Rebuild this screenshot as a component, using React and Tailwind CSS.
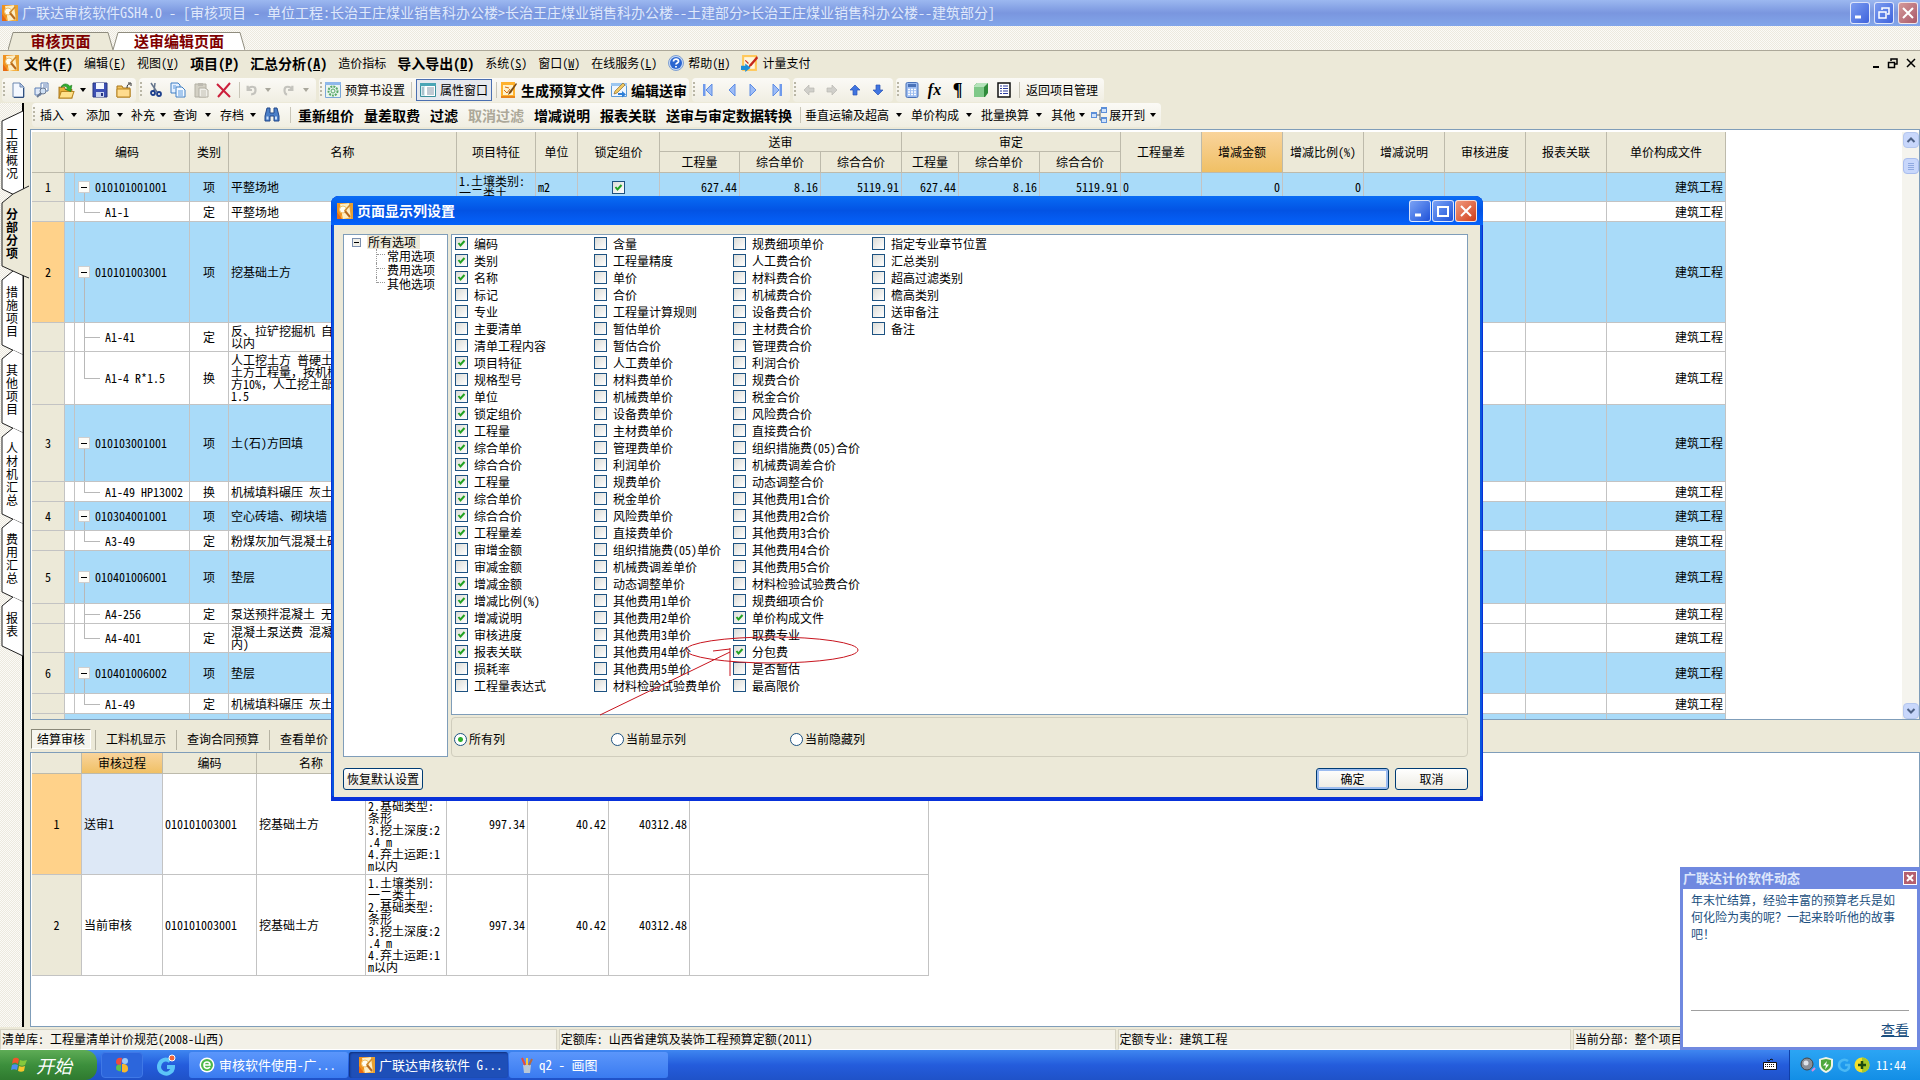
import React from "react";

const FONT = "font-[family-name:'Noto_Sans_Mono_CJK_SC','Noto_Sans_CJK_SC',sans-serif]";
const CHECKER =
  "bg-[conic-gradient(#fbfaf7_25%,#ece9de_0_50%,#fbfaf7_0_75%,#ece9de_0)] bg-[length:2px_2px]";

/* ---------- icons ---------- */

function AppIcon() {
  return (
    <svg viewBox="0 0 16 16" className="size-4 shrink-0">
      <rect width="16" height="16" rx="1" fill="#f6b040" />
      <path d="M0 0h10L3 16H0z" fill="#f0921e" />
      <path d="M3 1l12-1v14l-9 2z" fill="#fdeec4" />
      <path d="M12 0h4v16h-2z" fill="#e8a030" />
      <path d="M0 9l5 7H0z" fill="#e86a12" />
      <circle cx="6" cy="6.500" r="3.500" fill="#fffdf2" stroke="#eec06a" />
      <path d="M8 8l5 6" stroke="#b8691c" strokeWidth="2" />
      <path d="M13 2L7.500 8" stroke="#d08a2c" strokeWidth="1.500" />
    </svg>
  );
}

function Ico({ children, s = 16 }) {
  return (
    <svg viewBox="0 0 16 16" width={s} height={s} className="shrink-0">
      {children}
    </svg>
  );
}

const NewIcon = () => (
  <Ico>
    <path d="M3 1h7l4 4v10H3z" fill="#f4f8ff" stroke="#6d87b0" />
    <path d="M10 1v4h4z" fill="#b9cbea" stroke="#6d87b0" />
    <path d="M13.500 6v9.500H4" fill="none" stroke="#30507f" />
  </Ico>
);
const PagesIcon = () => (
  <Ico>
    <path d="M7 1h7v8H7z" fill="#fff" stroke="#5c7fb5" />
    <path d="M9 3h4M9 5h4M9 7h3" stroke="#5c7fb5" />
    <path d="M1 6h6v7H1z" fill="#dfe9f8" stroke="#5c7fb5" />
    <circle cx="9" cy="9" r="3" fill="#cfe0f5" stroke="#6b7a92" />
    <path d="M7 11l-4 4" stroke="#6b7a92" strokeWidth="2" />
  </Ico>
);
const OpenIcon = () => (
  <Ico s={17}>
    <path d="M1 5h5l1 2h6v8H1z" fill="#e9b038" stroke="#a9761b" />
    <path d="M3 9h12l-2 6H1z" fill="#ffe08a" stroke="#b98520" />
    <path d="M3 5c1-4 6-4 8-1l2-1-1 6-5-2 2-1C8 4 6 3 3 5z" fill="#2fb02f" stroke="#1c7a1c" strokeWidth="0.600" />
  </Ico>
);
const SaveIcon = () => (
  <Ico>
    <path d="M1 1h14v14H1z" fill="#3d50b4" stroke="#26347f" />
    <path d="M4 1h8v6H4z" fill="#f6f9ff" />
    <path d="M4 10h8v5H4z" fill="#c9d3ef" />
    <path d="M9 11h2v3H9z" fill="#26347f" />
  </Ico>
);
const FolderIcon = () => (
  <Ico>
    <path d="M1 4h5l1 2h7v9H1z" fill="#f2c35c" stroke="#a9761b" />
    <path d="M1 7h13v8H1z" fill="#ffdc8e" stroke="#b98520" />
    <path d="M11 6c0-3 1-4 3-4M12 1h3v3" fill="none" stroke="#333" />
  </Ico>
);
const CutIcon = () => (
  <Ico>
    <path d="M4 1l6 9M8 1L7 9" stroke="#64748b" strokeWidth="1.500" />
    <circle cx="6" cy="11" r="2" fill="none" stroke="#1d3f8c" strokeWidth="1.800" />
    <circle cx="12" cy="12" r="2" fill="none" stroke="#1d3f8c" strokeWidth="1.800" />
  </Ico>
);
const CopyIcon = () => (
  <Ico>
    <path d="M1 1h7l2 2v8H1z" fill="#e6f1ff" stroke="#3f7fc4" />
    <path d="M6 5h6l3 3v7H6z" fill="#f3f9ff" stroke="#3f7fc4" />
    <path d="M3 4h3M3 6h2M8 9h5M8 11h5M8 13h5" stroke="#5a9ae0" />
  </Ico>
);
const PasteIcon = () => (
  <Ico>
    <path d="M2 2h11v13H2z" fill="#d3d0c4" stroke="#b3b0a4" />
    <path d="M5 1h5v3H5z" fill="#bdbab0" />
    <path d="M6 6h6l3 2v7H6z" fill="#efeee8" stroke="#b3b0a4" />
    <path d="M8 9h5M8 11h5M8 13h5" stroke="#c3c0b4" />
  </Ico>
);
const DeleteIcon = () => (
  <Ico>
    <path d="M1 2l13 13M14 1L2 15" stroke="#cc1f3c" strokeWidth="2" />
  </Ico>
);
const UndoIcon = () => (
  <Ico s={14}>
    <path d="M3 3v5h5M3 8c2-5 9-5 9 0 0 3-2 5-5 5" fill="none" stroke="#c4c3bd" strokeWidth="2.500" />
  </Ico>
);
const RedoIcon = () => (
  <Ico s={14}>
    <path d="M13 3v5H8M13 8C11 3 4 3 4 8c0 3 1 5 3 5" fill="none" stroke="#c4c3bd" strokeWidth="2.500" />
  </Ico>
);
const GearBookIcon = () => (
  <Ico>
    <path d="M.5.5h15v15H.5z" fill="#e9f5ef" stroke="#7aa6d8" />
    <path d="M0 0h16v3H0z" fill="#8fb8ea" />
    <circle cx="8" cy="9" r="4.500" fill="none" stroke="#58a866" strokeWidth="2" strokeDasharray="2 1" />
    <circle cx="8" cy="9" r="2" fill="none" stroke="#58a866" />
  </Ico>
);
const PropsIcon = () => (
  <Ico>
    <path d="M.5 1.500h15v13H.5z" fill="#fff" stroke="#3b8f9c" />
    <path d="M0 1h16v3H0z" fill="#4aa5b5" />
    <path d="M1 4h4v10H1z" fill="#d5ecf0" />
    <path d="M2 6h2M2 8h2M2 10h2M2 12h2M7 6h7M7 8h7M7 10h7M7 12h7" stroke="#8296a8" />
  </Ico>
);
const BuildIcon = () => (
  <Ico>
    <path d="M0 0h14v16H0z" fill="#ffb22e" />
    <path d="M2 3h10v10H2z" fill="#fff3cd" />
    <path d="M0 14h14v2H0z" fill="#e8851a" />
    <path d="M3 8l3 3 3-4M4 5l4 1" stroke="#d46a12" fill="none" />
    <path d="M15 1L8 10l-1 3 3-2 6-9z" fill="#7a4a14" />
  </Ico>
);
const EditSendIcon = () => (
  <Ico>
    <path d="M.5 1.500h15v13H.5z" fill="#eef6ff" stroke="#5a9ad8" />
    <path d="M0 1h16v3H0z" fill="#9cc7f0" />
    <path d="M12 1L4 9l-1 3 3-1 8-8z" fill="#f0c860" stroke="#7a5a1c" strokeWidth="0.600" />
    <path d="M7 11h4V9l4 3.500-4 3V13H7z" fill="#2e7fd8" />
  </Ico>
);
const HelpIcon = () => (
  <Ico>
    <circle cx="8" cy="8" r="7.500" fill="#c9dcf8" stroke="#7f9fd0" />
    <circle cx="8" cy="8" r="6" fill="#2b66d0" />
    <path d="M5.500 6.500c0-3.500 5.500-3 5 0-.300 1.500-2.500 1.500-2.500 3M8 11v1.500" fill="none" stroke="#fff" strokeWidth="1.800" />
  </Ico>
);
const PayIcon = () => (
  <Ico s={17}>
    <path d="M1 0h14v15H1z" fill="#ffc85a" />
    <path d="M3 2h10v11H3z" fill="#fff6dd" />
    <path d="M15 1L8 9l-1 3 3-2 6-7z" fill="#c4261c" />
    <path d="M4 5l3 3" stroke="#c4261c" />
    <path d="M0 10h4V8l5 4-5 4v-2H0z" fill="#1f8fd6" />
  </Ico>
);
function Nav({ left, bar }) {
  return (
    <svg viewBox="0 0 12 14" className={left ? "h-3.5 w-3" : "h-3.5 w-3 rotate-180"}>
      {bar && <path d="M1 1h2.500v12H1z" fill="#6f9aec" />}
      <path d="M10 1v12L4 7z" fill="#9dbcf6" stroke="#5d8ce4" />
    </svg>
  );
}
const Arr = ({ rot, gray }) => (
  <svg viewBox="0 0 12 12" className={"size-3 " + rot}>
    <path
      d="M6 1l5 5H8v5H4V6H1z"
      fill={gray ? "#d0cfca" : "#3f74e0"}
      stroke={gray ? "#b9b8b3" : "#2b55b4"}
      strokeWidth="0.700"
    />
  </svg>
);
const CalcIcon = () => (
  <Ico>
    <rect x="2" y="0.500" width="12" height="15" rx="1.500" fill="#9cbcf0" stroke="#4a72b8" />
    <path d="M4 2h8v3H4z" fill="#4a72b8" />
    <path d="M4 7.500h8M4 10h8M4 12.500h8" stroke="#fff" strokeWidth="1.500" strokeDasharray="2 1" />
  </Ico>
);
const BoxIcon = () => (
  <Ico>
    <path d="M1 4l3-3h11v10l-3 4H1z" fill="#2f8b3a" />
    <path d="M1 5h10v10H1z" fill="#7fc888" />
    <path d="M1 4l3-3h11l-4 4H1z" fill="#b5e3ba" />
  </Ico>
);
const ListIcon = () => (
  <Ico>
    <path d="M2 1h12v14H2z" fill="#fff" stroke="#111" strokeWidth="1.500" />
    <path d="M4 4h2M4 6.500h2M4 9h2M4 11.500h2M7 4h5M7 6.500h5M7 9h5M7 11.500h5" stroke="#2f3fa0" strokeWidth="1.200" />
  </Ico>
);
const BinoIcon = () => (
  <Ico>
    <path d="M3 1h3v5h4V1h3l2 8v5h-5V9H6v5H1V9z" fill="#4b7fc8" stroke="#23488a" />
    <path d="M2.500 9.500h2v3h-2zM11 9.500h2v3h-2z" fill="#cfe2fb" />
  </Ico>
);
const ExpandIcon = () => (
  <Ico>
    <path d="M5 8h4M9 3v10M9 3h2M9 13h2" stroke="#55606e" fill="none" />
    <path d="M0 5h6v6H0zM10 0h6v6h-6zM10 10h6v6h-6z" fill="#5c8fd8" />
    <path d="M1 7h4v3H1zM11 2h4v3h-4zM11 12h4v3h-4z" fill="#cfe2fb" />
  </Ico>
);
const Caret = ({ gray, w = "w-5" }) => (
  <span className={"flex justify-center " + w}>
    <svg viewBox="0 0 6 4" className="h-1 w-1.5">
      <path d="M0 0h6L3 4z" fill={gray ? "#a9a79c" : "#000"} />
    </svg>
  </span>
);

/* ---------- toolbar parts ---------- */

const Grip = () => (
  <span className="mx-px h-4 w-0.5 bg-[repeating-linear-gradient(#b9b6a6_0_2px,transparent_2px_4px)]" />
);
const Sep = () => <span className="mx-1 h-4 w-px bg-[#c9c6b8]" />;
const Bar = ({ children, className = "" }) => (
  <div
    className={
      "flex h-6 items-center rounded-sm bg-linear-to-b from-[#fbfaf6] to-[#f0eee2] " + className
    }
  >
    <Grip />
    {children}
  </div>
);
const Tool = ({ children, label, w = "w-6" }) => (
  <button type="button" aria-label={label} className={"flex h-6 items-center justify-center " + w}>
    {children}
  </button>
);

const MENU = [
  ["文件", "F", true],
  ["编辑", "E"],
  ["视图", "V"],
  ["项目", "P", true],
  ["汇总分析", "A", true],
  ["造价指标"],
  ["导入导出", "D", true],
  ["系统", "S"],
  ["窗口", "W"],
  ["在线服务", "L"],
];

function MenuItem({ text, k, bold, children }) {
  return (
    <button type="button" className={"flex items-center gap-1 " + (bold ? "text-sm font-bold" : "text-xs")}>
      {children}
      <span>
        {text}
        {k && (
          <>
            (<u>{k}</u>)
          </>
        )}
      </span>
    </button>
  );
}

function WinBtn({ kind, dim, label }) {
  const look =
    kind === "close"
      ? dim
        ? "w-5 from-[#d59a9a] to-[#a8586a]"
        : "w-5.5 from-[#f0997c] to-[#cf3a14]"
      : dim
        ? "w-5 from-[#7d9cf0] to-[#3f62dc]"
        : "w-5.5 from-[#7ba2f5] to-[#1f50d8]";
  return (
    <button
      type="button"
      aria-label={label}
      className={"flex h-5.5 items-center justify-center rounded-[3px] border border-white/80 bg-linear-to-br " + look}
    >
      <svg viewBox="0 0 16 16" className="size-4" fill="none" stroke="#fff" strokeWidth="2">
        {kind === "min" && <path d="M3 12h6" strokeWidth="3" />}
        {kind === "max" && <path d="M3 4h10v9H3zM3 4h10" />}
        {kind === "restore" && <path d="M6 5V3h7v6h-2M3 7h7v6H3z" strokeWidth="1.500" />}
        {kind === "close" && <path d="M3 3l10 10M13 3L3 13" />}
      </svg>
    </button>
  );
}

/* ---------- left vertical tabs ---------- */

const SIDE = [
  { t: "工程概况", h: "h-[82px]", n: 82 },
  { t: "分部分项", h: "h-[77px]", n: 77, on: true },
  { t: "措施项目", h: "h-[79px]", n: 79 },
  { t: "其他项目", h: "h-[78px]", n: 78 },
  { t: "人材机汇总", h: "h-[91px]", n: 91 },
  { t: "费用汇总", h: "h-[78px]", n: 78 },
  { t: "报表", h: "h-[54px]", n: 54 },
];

function SideTabs() {
  return (
    <nav className={"relative flex w-6 shrink-0 flex-col border-r-2 border-black pt-[9px] " + CHECKER}>
      {SIDE.map((s, i) => (
        <button
          key={s.t}
          type="button"
          className={
            "relative flex w-6 items-center justify-center px-1.5 text-center text-xs/[13px] " +
            s.h +
            (s.on ? " z-10 font-bold" : "")
          }
        >
          <svg
            viewBox={"0 0 30 " + s.n}
            width="30"
            height={s.n}
            className="absolute top-0 left-0 overflow-visible"
          >
            <path
              d={
                (i === 0 ? "M23 -1L2 9" : s.on ? "M29 -8L13 0L2 9" : "M13 0L2 9") +
                "V" +
                (s.n - 5) +
                (s.on ? "L24 " + (s.n + 5) + "L29 " + (s.n + 7) : "L23 " + (s.n + 5) + (i === 0 ? "" : "V5"))
              }
              fill={s.on ? "#ece9d8" : "#fff"}
              stroke="#222"
            />
          </svg>
          <span className="relative w-3 break-all">{s.t}</span>
        </button>
      ))}
    </nav>
  );
}

/* ---------- main grid ---------- */

const ROWS = [
  { n: "1", code: "010101001001", type: "项", name: "平整场地", h: "h-[29px]" },
  { code: "A1-1", type: "定", name: "平整场地", h: "h-5", last: true },
  { n: "2", code: "010101003001", type: "项", name: "挖基础土方", h: "h-[101px]", sel: true },
  { code: "A1-41", type: "定", name: "反、拉铲挖掘机 自\n以内", h: "h-[29px]" },
  {
    code: "A1-4 R*1.5",
    type: "换",
    name: "人工挖土方 普硬土\n土方工程量，按机械\n方10%，人工挖土部\n1.5",
    h: "h-[53px]",
    last: true,
  },
  { n: "3", code: "010103001001", type: "项", name: "土(石)方回填", h: "h-[77px]" },
  { code: "A1-49 HP13002", type: "换", name: "机械填料碾压 灰土", h: "h-5", last: true },
  { n: "4", code: "010304001001", type: "项", name: "空心砖墙、砌块墙", h: "h-[29px]" },
  { code: "A3-49", type: "定", name: "粉煤灰加气混凝土砌", h: "h-5", last: true },
  { n: "5", code: "010401006001", type: "项", name: "垫层", h: "h-[53px]" },
  { code: "A4-256", type: "定", name: "泵送预拌混凝土 无", h: "h-5" },
  { code: "A4-401", type: "定", name: "混凝土泵送费 混凝\n内)", h: "h-[29px]", last: true },
  { n: "6", code: "010401006002", type: "项", name: "垫层", h: "h-[41px]" },
  { code: "A1-49", type: "定", name: "机械填料碾压 灰土", h: "h-5", last: true },
];

const COLS = [33, 125, 39, 228, 79, 42, 82, 80, 81, 81, 57, 81, 81, 81, 81, 81, 81, 81, 81, 119];
const FIRST = ["", "", "", "", "", "", "", "627.44", "8.16", "5119.91", "627.44", "8.16", "5119.91", "0", "0", "0", "", "", "", "建筑工程"];

const CELL = "border-r border-b border-[#c3c3c3] ";
const HEAD = "border-r border-b border-[#bdbaab] font-normal ";

function Check({ label, on }) {
  return (
    <label className="flex h-[17px] items-center gap-1.5 whitespace-nowrap">
      <span className="grid size-[13px] shrink-0 place-items-center">
        <input
          type="checkbox"
          defaultChecked={on}
          aria-label={label ? undefined : "锁定组价"}
          className="peer col-start-1 row-start-1 size-[13px] appearance-none border border-[#1d5281] bg-linear-to-br from-[#dcdcd7] to-white"
        />
        <svg viewBox="0 0 9 9" className="pointer-events-none col-start-1 row-start-1 hidden size-[9px] peer-checked:block">
          <path d="M1.500 4l2 2.500L7.500 2" fill="none" stroke="#21a121" strokeWidth="2" />
        </svg>
      </span>
      {label && <span>{label}</span>}
    </label>
  );
}

function CodeCell({ r }) {
  return (
    <td className={CELL + "relative p-0"}>
      <span className="absolute inset-y-0 left-[9px] w-px bg-[#c3c3c3]" />
      {r.n ? (
        <div className="flex items-center pl-[13px]">
          <span className="absolute top-1/2 bottom-0 left-[19px] w-px bg-[#b8b8b8]" />
          <button
            type="button"
            aria-label="折叠"
            className="relative flex size-3 items-center justify-center border border-[#cfcfcf] bg-[#fdfcf8]"
          >
            <span className="h-px w-1.5 bg-black" />
          </button>
          <span className="pl-[5px]">{r.code}</span>
        </div>
      ) : (
        <div className="pl-10">
          <span className={"absolute top-0 left-[19px] w-px bg-[#b8b8b8] " + (r.last ? "h-1/2" : "h-full")} />
          <span className="absolute top-1/2 left-[19px] h-px w-4 bg-[#b8b8b8]" />
          {r.code}
        </div>
      )}
    </td>
  );
}

function MainGrid() {
  return (
    <div className="flex h-[591px] shrink-0 overflow-hidden border border-[#7f9db9] bg-white pt-0.5 pl-px">
      <div className="min-w-0 flex-1 overflow-hidden">
        <table className="w-[1694px] table-fixed border-separate border-spacing-0 text-xs/3">
          <colgroup>
            {COLS.map((w, i) => (
              <col key={i} style={{ width: w }} />
            ))}
          </colgroup>
          <thead className="bg-[#ece9d8]">
            <tr className="h-[20px]">
              {["", "编码", "类别", "名称", "项目特征", "单位", "锁定组价"].map((t, i) => (
                <th key={i} rowSpan={2} className={HEAD + "p-0"}>
                  {t}
                </th>
              ))}
              <th colSpan={3} className={HEAD + "p-0"}>
                送审
              </th>
              <th colSpan={3} className={HEAD + "p-0"}>
                审定
              </th>
              {["工程量差", "增减金额", "增减比例(%)", "增减说明", "审核进度", "报表关联", "单价构成文件"].map((t) => (
                <th
                  key={t}
                  rowSpan={2}
                  className={HEAD + "p-0 whitespace-nowrap " + (t === "增减金额" ? "bg-linear-to-b from-[#f9d49b] to-[#f0c064]" : "")}
                >
                  {t}
                </th>
              ))}
            </tr>
            <tr className="h-[21px]">
              {["工程量", "综合单价", "综合合价", "工程量", "综合单价", "综合合价"].map((t, i) => (
                <th key={i} className={HEAD + "p-0"}>
                  {t}
                </th>
              ))}
            </tr>
          </thead>
          <tbody>
            {ROWS.map((r, i) => (
              <tr key={i} className={r.h + (r.n ? " bg-[#a9dbf9]" : " bg-white")}>
                <th className={CELL + "p-0 font-normal " + (r.sel ? "bg-[#ffd28a]" : "bg-[#ece9d8]")}>{r.n}</th>
                <CodeCell r={r} />
                <td className={CELL + "p-0 text-center"}>{r.type}</td>
                <td className={CELL + "overflow-hidden p-0 pl-0.5 whitespace-pre"}>{r.name}</td>
                <td className={CELL + "p-0 pl-0.5 whitespace-pre"}>{i === 0 ? "1.土壤类别:\n一二类土" : ""}</td>
                <td className={CELL + "p-0 pl-0.5"}>{i === 0 ? "m2" : ""}</td>
                <td className={CELL + "p-0"}>
                  {i === 0 && (
                    <div className="flex justify-center">
                      <Check on />
                    </div>
                  )}
                </td>
                {COLS.slice(7).map((_, j) => (
                  <td key={j} className={CELL + "p-0 px-0.5 " + (j === 6 ? "text-left" : "text-right")}>
                    {i === 0 ? FIRST[j + 7] : j === 12 ? "建筑工程" : ""}
                  </td>
                ))}
              </tr>
            ))}
            <tr className="h-[6px] bg-[#a9dbf9]">
              <th className={CELL + "bg-[#ece9d8] p-0"} />
              {COLS.slice(1).map((_, j) => (
                <td key={j} className={CELL + "p-0"} />
              ))}
            </tr>
          </tbody>
        </table>
      </div>
      <div className="flex w-[17px] flex-col items-center bg-[#f5f4ee]">
        <button type="button" aria-label="向上滚动" className="flex size-4 items-center justify-center rounded-sm border border-[#b5c7ee] bg-[#c8d7fb]">
          <svg viewBox="0 0 9 6" className="h-1.5 w-2.5">
            <path d="M1 5l3.500-3.500L8 5" fill="none" stroke="#4d6185" strokeWidth="2" />
          </svg>
        </button>
        <span className="mt-2.5 flex size-4 flex-col items-center justify-center gap-px rounded-sm border border-[#a9bdee] bg-[#c8d7fb]">
          <span className="h-px w-1.5 bg-[#8fa9e0]" />
          <span className="h-px w-1.5 bg-[#8fa9e0]" />
          <span className="h-px w-1.5 bg-[#8fa9e0]" />
          <span className="h-px w-1.5 bg-[#8fa9e0]" />
        </span>
        <button type="button" aria-label="向下滚动" className="mt-auto flex size-4 items-center justify-center rounded-sm border border-[#b5c7ee] bg-[#c8d7fb]">
          <svg viewBox="0 0 9 6" className="h-1.5 w-2.5">
            <path d="M1 1l3.500 3.500L8 1" fill="none" stroke="#4d6185" strokeWidth="2" />
          </svg>
        </button>
      </div>
    </div>
  );
}

/* ---------- lower grid ---------- */

const FEATURES = [
  "\n\n2.基础类型:\n条形\n3.挖土深度:2\n.4 m\n4.弃土运距:1\nm以内",
  "1.土壤类别:\n一二类土\n2.基础类型:\n条形\n3.挖土深度:2\n.4 m\n4.弃土运距:1\nm以内",
];
const LOW_COLS = [50, 81, 94, 109, 81, 81, 81, 81, 239];

function LowerPanel() {
  return (
    <>
      <div className="flex h-8 shrink-0 items-end pb-0.5 text-xs">
        <button type="button" className="mb-px ml-px h-5 w-[60px] border border-[#8a8878] border-r-white border-b-white bg-[#f6f5ee]">
          结算审核
        </button>
        <span className="ml-1 h-5 w-px bg-[#b5b2a2]" />
        {["工料机显示", "查询合同预算", "查看单价"].map((t) => (
          <React.Fragment key={t}>
            <button type="button" className="h-[22px] px-2.5 whitespace-nowrap">
              {t}
            </button>
            <span className="h-5 w-px bg-[#b5b2a2]" />
          </React.Fragment>
        ))}
      </div>
      <div className="min-h-0 flex-1 overflow-hidden border border-[#7f9db9] bg-white pl-px">
        <table className="w-[897px] table-fixed border-separate border-spacing-0 text-xs/3">
          <colgroup>
            {LOW_COLS.map((w, i) => (
              <col key={i} style={{ width: w }} />
            ))}
          </colgroup>
          <thead className="bg-[#ece9d8]">
            <tr className="h-[21px]">
              {["", "审核过程", "编码", "名称", "", "", "", "", ""].map((t, i) => (
                <th key={i} className={HEAD + "p-0 " + (i === 1 ? "bg-linear-to-b from-[#f9d49b] to-[#f0c064]" : "")}>
                  {t}
                </th>
              ))}
            </tr>
          </thead>
          <tbody>
            {["送审1", "当前审核"].map((t, i) => (
              <tr key={t} className="h-[101px]">
                <th className={CELL + "p-0 font-normal " + (i === 0 ? "bg-[#ffd28a]" : "bg-[#ece9d8]")}>{i + 1}</th>
                <td className={CELL + "p-0 pl-0.5 " + (i === 0 ? "bg-[#dde8f6]" : "")}>{t}</td>
                <td className={CELL + "p-0 pl-0.5"}>010101003001</td>
                <td className={CELL + "p-0 pl-0.5"}>挖基础土方</td>
                <td className={CELL + "p-0 pl-0.5 whitespace-pre"}>{FEATURES[i]}</td>
                <td className={CELL + "p-0 pr-0.5 text-right"}>997.34</td>
                <td className={CELL + "p-0 pr-0.5 text-right"}>40.42</td>
                <td className={CELL + "p-0 pr-0.5 text-right"}>40312.48</td>
                <td className={CELL + "p-0"} />
              </tr>
            ))}
          </tbody>
        </table>
      </div>
    </>
  );
}

/* ---------- dialog ---------- */

const OPTIONS = [
  "+编码 +类别 +名称 标记 专业 主要清单 清单工程内容 +项目特征 规格型号 +单位 +锁定组价 +工程量 +综合单价 +综合合价 +工程量 +综合单价 +综合合价 +工程量差 审增金额 审减金额 +增减金额 +增减比例(%) +增减说明 +审核进度 +报表关联 损耗率 工程量表达式",
  "含量 工程量精度 单价 合价 工程量计算规则 暂估单价 暂估合价 人工费单价 材料费单价 机械费单价 设备费单价 主材费单价 管理费单价 利润单价 规费单价 税金单价 风险费单价 直接费单价 组织措施费(05)单价 机械费调差单价 动态调整单价 其他费用1单价 其他费用2单价 其他费用3单价 其他费用4单价 其他费用5单价 材料检验试验费单价",
  "规费细项单价 人工费合价 材料费合价 机械费合价 设备费合价 主材费合价 管理费合价 利润合价 规费合价 税金合价 风险费合价 直接费合价 组织措施费(05)合价 机械费调差合价 动态调整合价 其他费用1合价 其他费用2合价 其他费用3合价 其他费用4合价 其他费用5合价 材料检验试验费合价 规费细项合价 +单价构成文件 取费专业 +分包费 是否暂估 最高限价",
  "指定专业章节位置 汇总类别 超高过滤类别 檐高类别 送审备注 备注",
].map((c) => c.split(" "));

function Radio({ label, on, w }) {
  return (
    <label className={"flex items-center gap-0.5 " + w}>
      <input
        type="radio"
        name="scope"
        defaultChecked={on}
        className="size-[13px] appearance-none rounded-full border border-[#1d5281] bg-white checked:bg-[radial-gradient(circle,#2fae2f_0_2px,#fff_3px)]"
      />
      <span>{label}</span>
    </label>
  );
}

const DlgBtn = ({ children, focus, w = "w-[73px]" }) => (
  <button
    type="button"
    className={
      "flex h-[22px] items-center justify-center rounded-[3px] border border-[#003c74] bg-linear-to-b from-white to-[#edebe2] whitespace-nowrap " +
      (focus ? "inset-ring-2 inset-ring-[#9cbcf0] " : "") +
      w
    }
  >
    {children}
  </button>
);

function Dialog() {
  return (
    <section
      role="dialog"
      aria-label="页面显示列设置"
      className="absolute top-[196px] left-[331px] z-20 flex h-[605px] w-[1152px] flex-col rounded-t-lg border-b-4 border-[#0831d9] bg-[#0855dd] text-xs shadow-[inset_0_0_0_1px_#0831d9]"
    >
      <header className="flex h-[29px] shrink-0 items-center gap-1 rounded-t-lg bg-linear-to-b from-[#0a6cf5] via-[#0353e4] to-[#0562fb] px-1.5">
        <AppIcon />
        <h2 className="flex-1 pb-0.5 text-sm font-bold text-white">页面显示列设置</h2>
        <span className="flex gap-px">
          <WinBtn kind="min" label="最小化" />
          <WinBtn kind="max" label="最大化" />
          <WinBtn kind="close" label="关闭" />
        </span>
      </header>
      <div className="mx-[3px] flex min-h-0 flex-1 flex-col bg-[#ece9d8] pt-[9px] pr-3 pb-[7px] pl-[9px]">
        <div className="flex min-h-0 flex-1 gap-[3px]">
          <div className="w-[105px] border border-[#7f9db9] bg-white pl-2 leading-[14px]">
            <div className="flex items-center gap-1.5">
              <span className="flex size-[9px] items-center justify-center border border-[#7b8fae] bg-[#f0efe8]">
                <span className="h-px w-[5px] bg-black" />
              </span>
              <span className="bg-[#ece9d8] px-px pr-1">所有选项</span>
            </div>
            <ul className="ml-6">
              {["常用选项", "费用选项", "其他选项"].map((t, i) => (
                <li key={t} className="flex h-3.5">
                  <span className={"w-px border-l border-dotted border-[#999] " + (i === 2 ? "h-1.5" : "")} />
                  <span className="h-1.5 w-2 border-b border-dotted border-[#999]" />
                  <span className="pl-0.5">{t}</span>
                </li>
              ))}
            </ul>
          </div>
          <div className="flex min-w-0 flex-1 flex-col gap-0.5">
            <div className="grid flex-1 auto-cols-[139px] grid-flow-col content-start justify-start border border-[#7f9db9] bg-white pl-[3px]">
              {OPTIONS.map((col, i) => (
                <div key={i}>
                  {col.map((t, j) => (
                    <Check key={j} label={t.replace("+", "")} on={t[0] === "+"} />
                  ))}
                </div>
              ))}
            </div>
            <div className="flex h-10 items-center rounded-sm border border-[#d0cdbd] pt-1 pl-0.5">
              <Radio label="所有列" on w="w-[157px]" />
              <Radio label="当前显示列" w="w-[179px]" />
              <Radio label="当前隐藏列" w="w-24" />
            </div>
          </div>
        </div>
        <footer className="mt-[11px] flex items-center gap-1.5">
          <DlgBtn w="w-20">恢复默认设置</DlgBtn>
          <span className="flex-1" />
          <DlgBtn focus>确定</DlgBtn>
          <DlgBtn>取消</DlgBtn>
        </footer>
      </div>
      <svg viewBox="0 0 1152 605" className="pointer-events-none absolute top-0 left-0 h-[605px] w-[1152px]" fill="none" stroke="#c8141e">
        <ellipse cx="441" cy="454" rx="86" ry="13" />
        <path d="M269 519L399 456M382 455l17-2M399 452v28" />
      </svg>
    </section>
  );
}

function NewsPopup() {
  return (
    <aside className="absolute right-0 bottom-[30px] z-20 flex h-[183px] w-[240px] flex-col bg-[#7089e0] px-[3px] pb-[3px] text-[#1b4f80]">
      <header className="flex h-[22px] shrink-0 items-center justify-between text-[13px] font-bold text-[#dde6fb]">
        广联达计价软件动态
        <button type="button" aria-label="关闭" className="flex size-3.5 items-center justify-center border border-white bg-[#b5606e]">
          <svg viewBox="0 0 8 8" className="size-2" stroke="#fff" strokeWidth="2">
            <path d="M1 1l6 6M7 1L1 7" />
          </svg>
        </button>
      </header>
      <div className="flex flex-1 flex-col bg-white px-2 pt-0.5">
        <p className="flex-1 text-xs/[17px]">
          年末忙结算，经验丰富的预算老兵是如
          <br />
          何化险为夷的呢？一起来聆听他的故事
          <br />
          吧！
        </p>
        <hr className="border-[#a0a0a0]" />
        <a href="#view" className="py-2.5 text-right text-sm/[16px] underline">
          查看
        </a>
      </div>
    </aside>
  );
}

/* ---------- task bar ---------- */

const Task = ({ icon, children, on }) => (
  <button
    type="button"
    className={
      "flex h-[26px] w-[159px] items-center gap-1 rounded-[3px] pl-2.5 text-[13px] whitespace-pre text-white " +
      (on ? "bg-[#1e4fb8] shadow-[inset_1px_1px_2px_#0f2f7a]" : "bg-linear-to-b from-[#5b96fb] to-[#3a7bf0]")
    }
  >
    {icon}
    {children}
  </button>
);

function TaskBar() {
  return (
    <footer className="flex h-[30px] shrink-0 items-center bg-linear-to-b from-[#3f86f0] via-[#245cdc] to-[#1f52c8]">
      <button type="button" className="flex h-full w-[97px] items-center gap-1.5 rounded-r-xl bg-linear-to-b from-[#5eac56] via-[#3c8f3c] to-[#2f7a2f] pl-2.5 text-lg text-white italic">
        <svg viewBox="0 0 20 18" className="h-[18px] w-5">
          <path d="M3 3c3-2 4-1 6 0L8 8C6 7 5 6 2 8z" fill="#f0562c" />
          <path d="M10 4c2 1 4 1 7 0l-2 5c-2 1-4 1-6 0z" fill="#86c93c" />
          <path d="M2 9c2-1 4-1 6 0l-1 5c-2-1-4-1-6 0z" fill="#4c8df0" />
          <path d="M9 10c2 1 4 1 6 0l-1 5c-2 1-4 1-6 0z" fill="#f8c62c" />
        </svg>
        开始
      </button>
      <button type="button" aria-label="快速启动" className="ml-1 flex h-[26px] w-[42px] items-center justify-center rounded-sm border border-[#3f78e6] bg-[#2c66dc]">
        <svg viewBox="0 0 18 18" className="size-[18px]">
          <path d="M9 2c-4-1-6 1-6 4s3 3 5 3z" fill="#f04a3c" />
          <circle cx="12" cy="5" r="3" fill="#9cc8f8" />
          <path d="M8 9c-4-1-5 1-5 3s3 4 5 3z" fill="#5cc04c" />
          <path d="M9 8c5 0 6 2 6 5s-3 4-6 3z" fill="#f8b82c" />
        </svg>
      </button>
      <button type="button" aria-label="浏览器" className="flex h-full w-[46px] items-center justify-center">
        <svg viewBox="0 0 20 22" className="h-[22px] w-5" fill="none">
          <path d="M14 7C8 3 3 8 3 13s6 8 10 6 4-5 4-6h-6" stroke="#5cc4f8" strokeWidth="4" />
          <circle cx="16" cy="4" r="3" fill="#f0663c" stroke="#fff" />
        </svg>
      </button>
      <div className="flex gap-px">
        <Task
          icon={
            <svg viewBox="0 0 16 16" className="size-4">
              <circle cx="8" cy="8" r="7.500" fill="#fff" />
              <circle cx="8" cy="8" r="6" fill="#4cb848" />
              <path d="M5 8h6c0-4-6-4-6 0s4 4 6 2" fill="none" stroke="#fff" strokeWidth="1.600" />
            </svg>
          }
        >
          审核软件使用-广...
        </Task>
        <Task on icon={<AppIcon />}>
          广联达审核软件 G...
        </Task>
        <Task
          icon={
            <svg viewBox="0 0 16 16" className="size-4">
              <path d="M4 8h8l-1 8H5z" fill="#b8c8d8" />
              <path d="M6 8L3 1" stroke="#e84a3c" strokeWidth="2" />
              <path d="M8 8V1" stroke="#f8c83c" strokeWidth="2" />
              <path d="M10 8l3-6" stroke="#b86a3c" strokeWidth="2" />
            </svg>
          }
        >
          q2 - 画图
        </Task>
      </div>
      <span className="ml-auto flex w-[26px] pb-0.5">
        <svg viewBox="0 0 14 14" className="size-3.5">
          <path d="M4 3l2 1 2-2 2 1" stroke="#111" fill="none" />
          <path d="M.5 5.500h13v7H.5z" fill="#fff" stroke="#111" />
          <path d="M2 7.500h10M2 9.500h10" stroke="#111" strokeDasharray="1 1" />
        </svg>
      </span>
      <div className="flex h-full w-[131px] items-center gap-0.5 border-l border-[#0f3fa8] bg-linear-to-b from-[#2ba5f4] to-[#128ee6] pl-2.5 text-xs text-white">
        <svg viewBox="0 0 16 16" className="size-4">
          <circle cx="7" cy="7" r="6" fill="#8a8f98" stroke="#444" />
          <circle cx="6" cy="6" r="2.500" fill="#dfe3ea" />
          <path d="M12 14l3-3" stroke="#d88ad8" strokeWidth="2" />
        </svg>
        <svg viewBox="0 0 16 16" className="size-4">
          <path d="M8 0l7 2v6c0 4-4 7-7 8-3-1-7-4-7-8V2z" fill="#f0f4e8" />
          <path d="M8 2l5 1v5c0 3-3 5-5 6-2-1-5-3-5-6V3z" fill="#4fa83c" />
          <path d="M9 4L5 8.500h3l-1 4 4-5H8z" fill="#fff" />
        </svg>
        <svg viewBox="0 0 16 16" className="size-4" fill="none">
          <path d="M12 4C8 1 3 4 3 8s5 7 8 5 2-4 2-5H9" stroke="#4ab8f4" strokeWidth="2.500" />
        </svg>
        <svg viewBox="0 0 16 16" className="size-4">
          <circle cx="8" cy="8" r="7.500" fill="#f4e02c" />
          <path d="M8 .5a7.500 7.500 0 0 1 0 15z" fill="#a8c828" />
          <path d="M8 4v8M4 8h8" stroke="#1c4a10" strokeWidth="2.500" />
        </svg>
        <time className="pl-1">11:44</time>
      </div>
    </footer>
  );
}

/* ---------- page ---------- */

const Drop = ({ children, w }) => (
  <button type="button" className="mr-0.5 flex items-center whitespace-nowrap">
    {children}
    <Caret w={w} />
  </button>
);

export default function App() {
  return (
    <div className={"relative flex h-screen w-full flex-col overflow-hidden bg-[#ece9d8] text-xs text-black " + FONT}>
      <header className="flex h-[26px] shrink-0 items-center gap-1 bg-linear-to-b from-[#9cb8f0] via-[#7a96df] to-[#82a6ea] px-0.5 pb-px">
        <AppIcon />
        <h1 className="flex-1 pb-0.5 text-sm font-medium whitespace-nowrap text-[#dfe8fb]">
          广联达审核软件GSH4.0 - [审核项目 - 单位工程:长治王庄煤业销售科办公楼&gt;长治王庄煤业销售科办公楼--土建部分&gt;长治王庄煤业销售科办公楼--建筑部分]
        </h1>
        <WinBtn kind="min" dim label="最小化" />
        <WinBtn kind="restore" dim label="还原" />
        <WinBtn kind="close" dim label="关闭" />
      </header>

      <nav className={"flex h-[25px] shrink-0 items-end border-b border-[#aca899] pl-2 " + CHECKER}>
        {[
          ["审核页面", 105, "w-[105px]", "#ece9d8"],
          ["送审编辑页面", 132, "w-[132px]", "#ffffff"],
        ].map(([t, w, cls, fill]) => (
          <button key={t} type="button" className={"relative h-[18px] text-[15px]/[18px] font-bold text-[#800000] " + cls}>
            <svg viewBox={"0 0 " + w + " 18"} width={w} height="18" className="absolute top-0 left-0">
              <path d={"M0 18L5 .5H" + (w - 5) + "L" + w + " 18"} fill={fill} stroke="#8f8c7e" />
            </svg>
            <span className="relative">{t}</span>
          </button>
        ))}
      </nav>

      <div className="flex h-[26px] shrink-0 items-center gap-[11px] pr-1 pb-0.5 pl-[3px]">
        <span className="-mr-1.5">
          <AppIcon />
        </span>
        {MENU.map(([t, k, b]) => (
          <MenuItem key={t} text={t} k={k} bold={b} />
        ))}
        <MenuItem text="帮助" k="H">
          <HelpIcon />
        </MenuItem>
        <MenuItem text="计量支付">
          <PayIcon />
        </MenuItem>
        <svg viewBox="0 0 44 12" className="ml-auto h-3 w-11" fill="none" stroke="#000" strokeWidth="2">
          <path d="M1 10h6" />
          <path d="M19 4V2h6v5h-2M16.500 5.500h6v5h-6z" strokeWidth="1.500" />
          <path d="M35 2l8 8M43 2l-8 8" strokeWidth="1.500" />
        </svg>
      </div>

      <div className="flex h-[26px] shrink-0 items-center gap-[3px] pl-0.5">
        <Bar>
          <Tool label="新建"><NewIcon /></Tool>
          <Tool label="查看"><PagesIcon /></Tool>
          <Tool label="打开"><OpenIcon /></Tool>
          <Caret w="w-2.5" />
          <Tool label="保存"><SaveIcon /></Tool>
          <Tool label="文件夹"><FolderIcon /></Tool>
        </Bar>
        <Bar className="pr-1">
          <Tool label="剪切" w="w-[23px]"><CutIcon /></Tool>
          <Tool label="复制" w="w-[23px]"><CopyIcon /></Tool>
          <Tool label="粘贴" w="w-[23px]"><PasteIcon /></Tool>
          <Tool label="删除" w="w-[23px]"><DeleteIcon /></Tool>
          <Sep />
          <Tool label="撤销" w="w-4"><UndoIcon /></Tool>
          <Caret gray w="w-4" />
          <Tool label="恢复"><RedoIcon /></Tool>
          <Caret gray w="w-3" />
        </Bar>
        <Bar className="pr-0.5">
          <button type="button" className="flex items-center gap-1 px-0.5">
            <GearBookIcon />
            预算书设置
          </button>
          <Sep />
          <button type="button" className="flex h-[22px] items-center gap-1 border border-[#4b6fb0] bg-[#e6e9ee] px-[3px] whitespace-nowrap">
            <PropsIcon />
            属性窗口
          </button>
          <Sep />
          <button type="button" className="flex items-center gap-1 text-sm font-bold whitespace-nowrap">
            <BuildIcon />
            生成预算文件
          </button>
          <button type="button" className="ml-1.5 flex items-center gap-1 text-sm font-bold whitespace-nowrap">
            <EditSendIcon />
            编辑送审
          </button>
        </Bar>
        <Bar className="pr-0.5">
          <Tool label="首条" w="w-[23px]"><Nav left bar /></Tool>
          <Tool label="上一条" w="w-[23px]"><Nav left /></Tool>
          <Tool label="下一条" w="w-[23px]"><Nav /></Tool>
          <Tool label="末条" w="w-[23px]"><Nav bar /></Tool>
        </Bar>
        <Bar className="pr-1">
          <Tool label="左移" w="w-[23px]"><Arr rot="-rotate-90" gray /></Tool>
          <Tool label="右移" w="w-[23px]"><Arr rot="rotate-90" gray /></Tool>
          <Tool label="上移" w="w-[23px]"><Arr rot="" /></Tool>
          <Tool label="下移" w="w-[23px]"><Arr rot="rotate-180" /></Tool>
        </Bar>
        <Bar className="pr-1.5">
          <Tool label="计算器" w="w-[23px]"><CalcIcon /></Tool>
          <button type="button" className="w-[23px] font-[family-name:'Liberation_Serif',serif] text-base/4 font-bold italic">fx</button>
          <button type="button" className="w-[23px] font-[family-name:'Liberation_Serif',serif] text-lg/4 font-bold">¶</button>
          <Tool label="图块" w="w-[23px]"><BoxIcon /></Tool>
          <Tool label="列表" w="w-[23px]"><ListIcon /></Tool>
          <Sep />
          <button type="button" className="pl-0.5 whitespace-nowrap">返回项目管理</button>
        </Bar>
      </div>

      <div className="flex min-h-0 flex-1">
        <SideTabs />
        <main className="flex min-w-0 flex-1 flex-col pl-1.5">
          <div className="flex h-[26px] shrink-0 items-start pl-0.5">
            <Bar className="pr-0.5">
              <span className="w-1" />
              <Drop>插入</Drop>
              <Drop w="w-[19px]">添加</Drop>
              <Drop w="w-4">补充</Drop>
              <Drop w="w-[21px]">查询</Drop>
              <Drop w="w-[18px]">存档</Drop>
              <Tool label="查找" w="w-4"><BinoIcon /></Tool>
              <span className="w-1.5" />
              <Sep />
              <div className="flex gap-2.5 pl-[3px] text-sm font-bold whitespace-nowrap">
                {["重新组价", "量差取费", "过滤", "取消过滤", "增减说明", "报表关联", "送审与审定数据转换"].map((t) => (
                  <button key={t} type="button" disabled={t === "取消过滤"} className="disabled:text-[#aca899]">
                    {t}
                  </button>
                ))}
              </div>
              <span className="w-1" />
              <Sep />
              <Drop>垂直运输及超高</Drop>
              <Drop>单价构成</Drop>
              <Drop w="w-5">批量换算</Drop>
              <Drop w="w-3.5">其他</Drop>
              <button type="button" className="flex items-center gap-0.5 whitespace-nowrap">
                <ExpandIcon />
                展开到
                <Caret w="w-3" />
              </button>
            </Bar>
          </div>
          <MainGrid />
          <LowerPanel />
        </main>
      </div>

      <div className="flex h-[23px] shrink-0 items-end gap-0.5 bg-[#ece9d8] text-xs/[18px]">
        {[
          ["清单库: 工程量清单计价规范(2008-山西)", "w-[29%]"],
          ["定额库: 山西省建筑及装饰工程预算定额(2011)", "w-[29%]"],
          ["定额专业: 建筑工程", "w-[23.600%]"],
          ["当前分部: 整个项目", "flex-1"],
        ].map(([t, w]) => (
          <div key={t} className={"h-[21px] truncate border border-[#d6d3c4] border-b-white bg-[#f3f1e8] pl-px " + w}>
            {t}
          </div>
        ))}
      </div>
      <TaskBar />

      <Dialog />
      <NewsPopup />
    </div>
  );
}
